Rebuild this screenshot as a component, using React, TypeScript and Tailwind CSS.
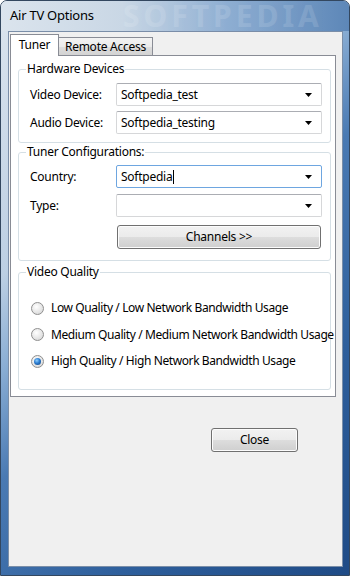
import React from 'react'

function Arrow() {
  return (
    <svg width="7" height="4" viewBox="0 0 7 4" className="shrink-0">
      <path d="M0 0h7L3.5 4z" fill="#000" />
    </svg>
  )
}

function Combo({ value, focused, caret }: { value: string; focused?: boolean; caret?: boolean }) {
  return (
    <div
      className={
        focused
          ? 'flex h-[23px] w-[206px] items-center rounded-[2px] border border-[#6ea6e0] bg-white pl-[4px] pr-[9px]'
          : 'flex h-[23px] w-[206px] items-center rounded-[2px] border border-[#d6d7d9] border-t-[#abadb3] bg-white pl-[4px] pr-[9px]'
      }
    >
      <span className="flex flex-1 items-center text-[12px] leading-[16px]">
        {value}
        {caret && <span className="ml-px inline-block h-[14px] w-px bg-black" />}
      </span>
      <Arrow />
    </div>
  )
}

function Row({ label, children }: { label: string; children: React.ReactNode }) {
  return (
    <div className="flex items-center">
      <span className="w-[86px] text-[12px] leading-[16px]">{label}</span>
      {children}
    </div>
  )
}

function Radio({ label, checked }: { label: string; checked?: boolean }) {
  return (
    <div className="flex h-[18px] items-center">
      <span className="flex h-[13px] w-[13px] shrink-0 items-center justify-center rounded-full border border-[#8f8f8f] bg-[radial-gradient(circle_at_40%_35%,#ffffff_0%,#e6e6e6_55%,#cfcfcf_100%)]">
        {checked && (
          <span className="h-[7px] w-[7px] rounded-full bg-[radial-gradient(circle_at_40%_35%,#8fd0ff_0%,#2b7cd0_45%,#0f3d77_100%)]" />
        )}
      </span>
      <span className="ml-[7px] whitespace-nowrap text-[12px] leading-[16px] tracking-[-0.4px]">{label}</span>
    </div>
  )
}

function Button({ label, className }: { label: string; className: string }) {
  return (
    <div
      className={
        'flex h-[24px] items-center justify-center rounded-[3px] border border-[#707070] bg-[linear-gradient(#f2f2f2_0%,#ebebeb_50%,#dddddd_51%,#cfcfcf_100%)] text-[12px] leading-[16px] shadow-[inset_0_0_0_1px_#fcfcfc] ' +
        className
      }
    >
      {label}
    </div>
  )
}

export default function App() {
  return (
    <div className="relative h-[576px] w-[350px] overflow-hidden rounded-t-[7px] border border-[#33475f] bg-[linear-gradient(135deg,#dce5ee_0%,#bccfe3_30%,#8aaed4_40%,#4a7ab3_52%,#2e5f9c_75%,#1f4b86_100%)] font-['Noto_Sans',sans-serif] tracking-[-0.25px] text-black">
      <div className="flex h-[30px] items-center bg-[linear-gradient(90deg,#dbe4ed_0%,#c9d7e5_35%,#8eaed2_65%,#5d87b8_100%)] pl-[9px] text-[13px]">
        Air TV Options
      </div>
      <span className="pointer-events-none absolute left-[122px] top-[2px] select-none whitespace-nowrap text-[30px] font-bold leading-[26px] tracking-[4px] text-white opacity-[0.12]">
        SOFTPEDIA
      </span>

      <div className="ml-[7px] mr-[6px] flex h-[536px] flex-col border border-[#7a8ea8] bg-[#f0f0f0] pl-px pt-[2px]">
        {/* tabs */}
        <div className="flex h-[21px] items-end">
          <div className="relative z-10 -mb-px flex h-[22px] w-[49px] items-start justify-center border border-b-0 border-[#898c95] bg-white pt-[2px] text-[12px] leading-[16px]">
            Tuner
          </div>
          <div className="flex h-[18px] w-[94px] items-center justify-center border border-b-0 border-l-0 border-[#898c95] bg-[linear-gradient(#f3f3f3_0%,#ebebeb_50%,#dddddd_51%,#d3d3d3_100%)] text-[12px] leading-[16px]">
            Remote Access
          </div>
        </div>

        <div className="flex h-[342px] w-[326px] flex-col border border-[#898c95] bg-white pl-[7px] pr-[4px] pt-[5px]">
          <fieldset className="min-w-0 rounded-[3px] border border-[#d5dfe5] pb-[8px] pl-[11px] pr-[7px]">
            <legend className="-ml-[4px] px-px text-[12px] leading-[16px]">Hardware Devices</legend>
            <div className="mt-[6px] flex flex-col gap-[5px]">
              <Row label="Video Device:">
                <Combo value="Softpedia_test" />
              </Row>
              <Row label="Audio Device:">
                <Combo value="Softpedia_testing" />
              </Row>
            </div>
          </fieldset>

          <fieldset className="mt-px min-w-0 rounded-[3px] border border-[#d5dfe5] pb-[11px] pl-[11px] pr-[7px]">
            <legend className="-ml-[4px] px-px text-[12px] leading-[16px]">Tuner Configurations:</legend>
            <div className="mt-[5px] flex flex-col">
              <Row label="Country:">
                <Combo value="Softpedia" focused caret />
              </Row>
              <div className="mt-[6px]">
                <Row label="Type:">
                  <Combo value="" />
                </Row>
              </div>
              <div className="ml-[87px] mt-[8px]">
                <Button label="Channels >>" className="w-[204px]" />
              </div>
            </div>
          </fieldset>

          <fieldset className="mt-[3px] min-w-0 rounded-[3px] border border-[#d5dfe5] pb-[19px] pl-[12px]">
            <legend className="-ml-[5px] px-px text-[12px] leading-[16px]">Video Quality</legend>
            <div className="mt-[19px] flex flex-col gap-[8.5px]">
              <Radio label="Low Quality / Low Network Bandwidth Usage" />
              <Radio label="Medium Quality / Medium Network Bandwidth Usage" />
              <Radio label="High Quality / High Network Bandwidth Usage" checked />
            </div>
          </fieldset>
        </div>

        <div className="mt-[31px] flex justify-end pr-[44px]">
          <Button label="Close" className="w-[87px]" />
        </div>
      </div>
    </div>
  )
}
